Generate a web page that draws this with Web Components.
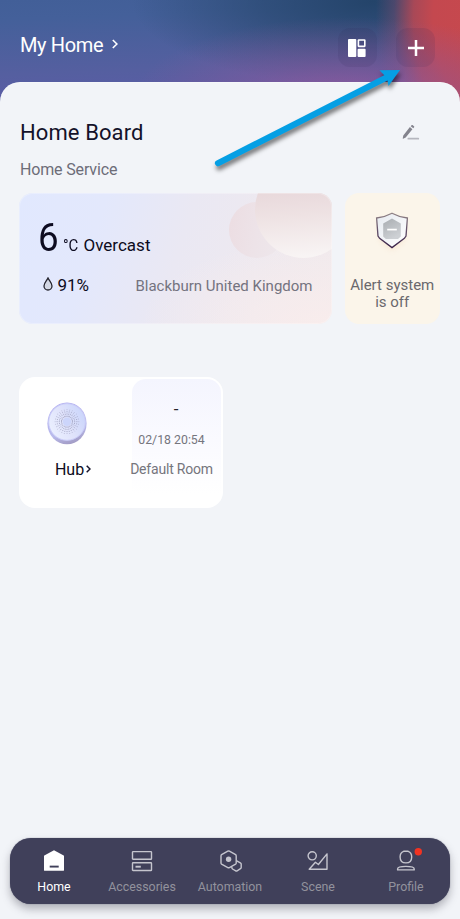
<!DOCTYPE html>
<html lang="en">
<head>
<meta charset="utf-8">
<title>My Home</title>
<style>
html,body{margin:0;height:100%;overflow:hidden}
body{font-family:Roboto,"Noto Sans",sans-serif;background:#f2f4f8}
</style>
</head>
<body>
<home-screen></home-screen>
<script>
const define = (name, html) => {
  const t = document.createElement('template');
  t.innerHTML = html;
  customElements.define(name, class extends HTMLElement {
    constructor() {
      super();
      this.attachShadow({mode: 'open'}).append(t.content.cloneNode(true));
    }
  });
};

define('icon-button', `
<style>
:host{display:flex;width:39px;height:39px;border-radius:12px;background:rgba(45,40,85,.11);align-items:center;justify-content:center}
</style><slot></slot>`);

define('top-bar', `
<style>
:host{display:flex;height:82px;box-sizing:border-box;padding:28px 25px 0 20px;gap:19.5px;color:#fff}
.name{flex:1;display:flex;align-items:center;gap:9px;height:34px;font-size:20px;line-height:34px;letter-spacing:-.35px}
svg{display:block}
.name svg{margin-top:-2px}
</style>
<div class="name"><span>My Home</span>
<svg width="6" height="10" viewBox="0 0 6 10" fill="none" stroke="#fff" stroke-width="1.6"><path d="M.8 1 4.9 5 .8 9"/></svg></div>
<icon-button><svg width="18" height="18" viewBox="0 0 18 18"><rect x="0" y="0" width="8.3" height="18" rx="1" fill="#fff"/><rect x="10.4" y="1" width="6.4" height="6.4" rx=".3" fill="none" stroke="#fff" stroke-width="1.6"/><rect x="9.6" y="9.8" width="8" height="8.2" rx="1" fill="#fff"/></svg></icon-button>
<icon-button><svg width="16" height="16" viewBox="0 0 16 16" stroke="#fff" stroke-width="2.5"><path d="M0 8H16M8 0V16"/></svg></icon-button>`);

define('section-title', `
<style>
:host{display:block;padding:0 1px}
.row{display:flex;justify-content:space-between;align-items:center;height:30px;font-size:22px;line-height:30px;letter-spacing:.1px;color:#14122a}
.row svg{margin:-1px 20px 0 0}
.sub{margin-top:12px;font-size:16px;line-height:20px;letter-spacing:-.15px;color:#6d6d78}
</style>
<div class="row"><slot></slot>
<svg width="18" height="17" viewBox="0 0 18 17"><path d="M9.5 1.2a.7.7 0 0 1 1-.1l1.5 1.2a.7.7 0 0 1 .1 1l-.8 1L8.7 2.2ZM7.9 3.1 10.4 5.2 3.7 13.4 1.1 14.8.7 14.4 1.3 11.4Z" fill="#83838d"/><path d="M6.3 14.7H16.3" stroke="#b5b6be" stroke-width="1.7" stroke-linecap="round"/></svg></div>
<div class="sub"><slot name="sub"></slot></div>`);

define('weather-card', `
<style>
:host{display:flex;flex-direction:column;position:relative;box-sizing:border-box;width:312.5px;height:131px;border-radius:14px;overflow:hidden;padding:22px 19px 0 19.5px;color:#0d0b20;
background:radial-gradient(180px 85px at 300px 131px,rgba(250,237,236,.8),rgba(250,237,236,0)),linear-gradient(108deg,#e1e8fe 0%,#e3e8fc 25%,#eae8f3 50%,#eee9ef 75%,#f1eaec 100%)}
.c1,.c2{position:absolute;border-radius:50%}
.c1{left:210px;top:9px;width:56px;height:56px;background:linear-gradient(100deg,#ecdde2 0%,#ede3e8 50%,#eee8ec 100%)}
.c2{left:236px;top:-32px;width:97px;height:97px;background:linear-gradient(176deg,#e8d8db 30%,#eee2e3 55%,#f8f4f4 95%)}
.edge{position:absolute;inset:0;border-radius:14px;box-shadow:inset 0 0 0 1px rgba(255,255,255,.28)}
.temp{display:flex;align-items:baseline;height:46px;line-height:46px;font-size:39px}
.num{transform:scaleX(.94);transform-origin:0 50%;width:20px;margin-left:-.5px}
.temp .cond{font-size:17px;margin-left:5px;word-spacing:-3.7px}
.temp i{font-style:normal;display:inline-block;transform:scaleX(.88);transform-origin:0 50%;width:20px}
.low{display:flex;align-items:center;height:20px;margin-top:14.5px;font-size:17px;line-height:20px}
.low svg{margin:-2px 5px 0 4px}
.loc{margin-left:auto;font-size:15px;color:#74737f;padding-top:2px}
</style>
<div class="c1"></div><div class="c2"></div><div class="edge"></div>
<div class="temp"><span class="num">6</span><span class="cond"><i>°C</i> Overcast</span></div>
<div class="low"><svg width="10" height="14" viewBox="0 0 10 14"><path d="M5 1C4 3.4 1 6 1 9a4 4 0 0 0 8 0C9 6 6 3.4 5 1Z" fill="#d3d7e4" stroke="#25242e" stroke-width="1.3"/></svg><span>91%</span><span class="loc">Blackburn United Kingdom</span></div>`);

define('alert-card', `
<style>
:host{display:flex;flex-direction:column;align-items:center;box-sizing:border-box;width:95.5px;height:131px;border-radius:14px;background:#fbf5ea;padding-top:14px;font-size:15px;line-height:17.5px;color:#6a686d;text-align:center}
svg{display:block;overflow:visible;margin-bottom:24px}
</style>
<svg width="40" height="46" viewBox="0 0 40 46"><defs>
<linearGradient id="s" x2="0" y2="1"><stop offset="0" stop-color="#8f8285"/><stop offset=".5" stop-color="#625069"/><stop offset="1" stop-color="#382048"/></linearGradient>
<linearGradient id="f" x2="1" y2="1"><stop offset="0" stop-color="#e6eaf0"/><stop offset="1" stop-color="#fff"/></linearGradient>
<linearGradient id="h" x2=".5" y2="1"><stop offset="0" stop-color="#a9adb1"/><stop offset="1" stop-color="#cdd0d4"/></linearGradient>
<filter id="b" x="-50%" y="-50%" width="200%" height="200%"><feGaussianBlur stdDeviation="3"/></filter></defs>
<path d="M8 14H32V32L20 43 8 32Z" fill="#edc8a5" opacity=".4" filter="url(#b)"/>
<path d="M20 6.2Q27 10 35.4 11L34 29 32.4 31.3 20 40.6 7.6 31.3 6 29 4.6 11Q13 10 20 6.2Z" fill="url(#f)" stroke="url(#s)" stroke-width="1.3"/>
<path d="M20 11.5 28.8 16.5V29.5L26 32H13.8L11.2 29.5V16.5Z" fill="url(#h)"/><path d="M15.2 22.6H24.8" stroke="#fff" stroke-width="1.7"/></svg>
<div>Alert system<br>is off</div>`);

const rays = Array.from({length: 28}, (_, i) => {
  const a = i * Math.PI / 14, c = Math.cos(a), s = Math.sin(a);
  return `M${20 + 5 * c} ${19.7 + 5 * s}L${20 + 12.2 * c} ${19.7 + 12.2 * s}`;
}).join('');

define('device-card', `
<style>
:host{display:flex;box-sizing:border-box;width:203.5px;height:131px;border-radius:16px;background:#fff;padding:2px 2px 8px 0}
.left{flex:none;width:112.5px;display:flex;flex-direction:column;align-items:center;box-sizing:border-box;padding:22.5px 16px 0 0}
.left svg{display:block}
.name{display:flex;align-items:center;gap:2px;margin-top:15px;margin-left:11.5px;font-size:16px;line-height:20px;color:#0d0b20}
.name svg{margin-top:-2px}
.right{flex:none;width:89px;border-radius:14px 14px 0 0;background:linear-gradient(#f4f5fe,#fafaff 50%,#fff 95%);display:flex;flex-direction:column;align-items:center;color:#75757d;font-size:12.3px;white-space:nowrap}
.dash{color:#26242c;font-size:17px;line-height:20px;margin-top:20px;height:20px}
.date{line-height:16px;margin-top:13px;margin-right:9px}
.room{font-size:14px;letter-spacing:-.2px;line-height:16px;margin-top:13px;margin-right:9px}
</style>
<div class="left">
<svg width="40" height="43" viewBox="0 0 40 43"><defs>
<linearGradient id="rim" x1=".3" x2=".6" y2="1"><stop offset="0" stop-color="#b1adf0"/><stop offset=".7" stop-color="#b9bbec"/><stop offset="1" stop-color="#a29bc4"/></linearGradient>
<linearGradient id="face" x1="0" y1=".7" x2="1" y2=".2"><stop offset="0" stop-color="#ebf0ff"/><stop offset=".5" stop-color="#dfe2fb"/><stop offset="1" stop-color="#c8d4fb"/></linearGradient></defs>
<ellipse cx="20" cy="21.4" rx="19.6" ry="20.9" fill="url(#rim)"/><circle cx="20" cy="20" r="18.3" fill="url(#face)" stroke="#cbcdf8" stroke-width="1"/>
<path d="${rays}" stroke="#8b8cad" stroke-width=".9" stroke-dasharray="1 1.2" opacity=".75"/><circle cx="20" cy="19.7" r="4.2" fill="#ccd5fb"/></svg>
<div class="name"><span>Hub</span><svg width="5" height="8" viewBox="0 0 5 8" fill="none" stroke="#15132a" stroke-width="1.5"><path d="M.7.8 4 4 .7 7.2"/></svg></div></div>
<div class="right"><div class="dash">-</div><div class="date">02/18 20:54</div><div class="room">Default Room</div></div>`);

define('nav-item', `
<style>
:host{display:flex;flex:1 1 0;min-width:0;flex-direction:column;align-items:center;box-sizing:border-box;padding-top:10px;color:#92929d;font-size:12.4px;line-height:16px}
:host([active]){color:#fff}
.ic{height:26px;margin-bottom:5px}
</style>
<div class="ic"><slot name="icon"></slot></div><slot></slot>`);

define('nav-bar', `
<style>
:host{display:flex;height:66px;margin:0 10px;border-radius:21px;background:#40405a;box-shadow:0 5px 9px rgba(60,60,75,.36),0 0 1px #62627b}
svg{display:block;fill:none;stroke:#c5c5ce;stroke-width:1.4;overflow:visible}
</style>
<nav-item active><svg slot="icon" width="26" height="26" viewBox="0 0 26 26"><path d="M13 2.3 22.7 7.4Q23 7.6 23 8V22.3Q23 22.7 22.6 22.7H3.3Q3 22.7 3 22.3V8Q3 7.6 3.3 7.4Z" fill="#fff" stroke="none"/><path d="M8.7 18.6H17.7" stroke="#40405a" stroke-width="1.9"/></svg>Home</nav-item>
<nav-item><svg slot="icon" width="26" height="26" viewBox="0 0 26 26"><rect x="3.5" y="3.6" width="19" height="7.7" rx=".6"/><rect x="3.5" y="14.8" width="19" height="7.7" rx=".6"/><path d="M6.5 18.7H11.8" stroke-width="1.9"/></svg>Accessories</nav-item>
<nav-item><svg slot="icon" width="26" height="26" viewBox="0 0 26 26"><path d="M10.8 3.2Q11.6 2.8 12.4 3.2L18.6 6.7Q19.2 7.1 19.2 7.9V14.9Q19.2 15.7 18.6 16.1L12.4 19.6Q11.6 20 10.8 19.6L4.6 16.1Q4 15.7 4 14.9V7.9Q4 7.1 4.6 6.7Z"/><circle cx="11.6" cy="11.3" r="2.7" fill="#c5c5ce" stroke="none"/><path d="M19.3 12.6 23.3 14.8Q24.2 15.3 24.2 16V19.6Q24.2 20.3 23.5 20.7L20.1 22.8Q19.4 23.2 18.7 22.8L15.6 21Q14.8 20.6 14.8 18.9"/></svg>Automation</nav-item>
<nav-item><svg slot="icon" width="26" height="26" viewBox="0 0 26 26"><circle cx="7.2" cy="7.8" r="4.1"/><path d="M4.2 21.3 10.4 14.2 13.4 16.5 22 5.9V21.3Z" stroke-linejoin="round"/></svg>Scene</nav-item>
<nav-item><svg slot="icon" width="26" height="26" viewBox="0 0 26 26"><path d="M10.6 3.3H15.2Q18.7 4.5 18.7 8.9 18.7 14.9 12.9 14.9 7.1 14.9 7.1 8.9 7.1 4.5 10.6 3.3Z"/><path d="M4.6 21.9V21Q4.6 18.4 12.9 18.4T21.2 21V21.9Z" stroke-linejoin="round"/><circle cx="25.3" cy="3.7" r="3.7" fill="#f23322" stroke="none"/></svg>Profile</nav-item>`);

define('pointer-arrow', `
<style>:host{position:absolute;left:0;top:0}svg{display:block;filter:drop-shadow(1.5px 4px 2px rgba(0,0,0,.5))}</style>
<svg width="460" height="190"><path d="M218 163.2 389 76.2" stroke="#059fe4" stroke-width="6.2" stroke-linecap="round"/><path d="M400 70 388.5 86 387 78 379.5 70.3Z" fill="#059fe4"/></svg>`);

define('home-screen', `
<style>
:host{display:flex;flex-direction:column;position:relative;height:919px;width:460px;overflow:hidden;
background:
radial-gradient(220px 85px at 350px 102px,rgba(155,88,155,.8),rgba(140,88,155,.45) 50%,rgba(130,88,155,0)),
radial-gradient(130px 200px at 498px 18px,#c8494d 0%,#c4484f 50%,rgba(190,72,82,.85) 65%,rgba(160,75,105,.3) 80%,rgba(150,75,115,0) 94%),
radial-gradient(240px 85px at 372px 2px,#24446a,rgba(38,70,108,.65) 45%,rgba(60,92,140,0)),
linear-gradient(178deg,#425f98 0,#44609a 20px,#555fa0 75px,#5b5ca6 105px)}
.sheet{flex:1;background:#f2f4f8;border-radius:20px 20px 0 0;display:flex;flex-direction:column;box-sizing:border-box;padding:35.5px 19px 15px;box-shadow:inset 0 1px 0 rgba(255,255,255,.3)}
.cards{display:flex;justify-content:space-between;margin:13px 1px 53.5px 0}
device-card{flex:none}
nav-bar{margin:auto -9px 0}
</style>
<top-bar></top-bar>
<div class="sheet">
<section-title>Home Board<span slot="sub">Home Service</span></section-title>
<div class="cards"><weather-card></weather-card><alert-card></alert-card></div>
<device-card></device-card>
<nav-bar></nav-bar>
</div>
<pointer-arrow></pointer-arrow>`);
</script>
</body>
</html>
